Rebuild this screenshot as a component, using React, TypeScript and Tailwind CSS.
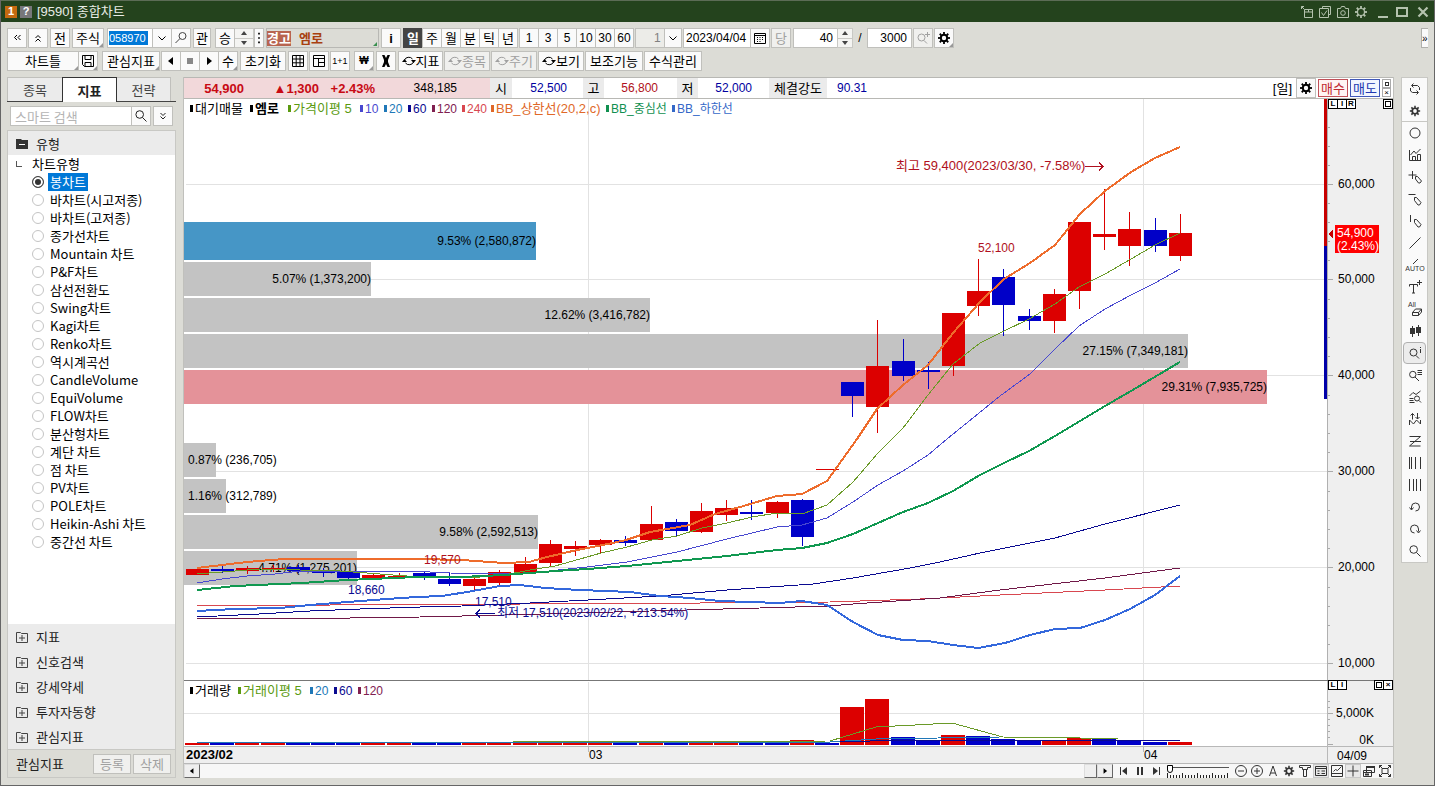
import { useState } from 'react';
import type { ReactNode } from 'react';
import clsx from 'clsx';

type Point = [number, number];

// name -> path data on a 14x14 grid; filled paths go in `fill`
const icons: Record<string, { d?: string; fill?: string }> = {
  left2: { d: 'M7 4 4.5 6.5 7 9M10.5 4 8 6.5 10.5 9' },
  up2: { d: 'M4.500 7 7 4.500 9.500 7M4.500 10.500 7 8 9.500 10.500' },
  down2: { d: 'M4.500 4 7 6.500 9.500 4M4.500 7.500 7 10 9.500 7.500' },
  down: { d: 'M3.500 5.500 7 9 10.500 5.500' },
  dots: { fill: 'M6 1h2v2H6zM6 6h2v2H6zM6 11h2v2H6z' },
  search: { d: 'M9.500 5.500a3.800 3.800 0 1 1-7.600 0a3.800 3.800 0 1 1 7.600 0M8.500 8.500 12.500 12.500' },
  find: { d: 'M12 5a3.500 3.500 0 1 1-7 0a3.500 3.500 0 1 1 7 0M6 7.500 1.500 12' },
  findPlus: { d: 'M9 6.500a3.500 3.500 0 1 1-7 0a3.500 3.500 0 1 1 7 0M8 9.500 11 12.500M11.500 1v5M9 3.500h5' },
  save: { d: 'M1.500 1.500h11v11h-9l-2-2zM4 1.500v4h6v-4M4 12.500v-4h6v4' },
  table: { d: 'M1.500 1.500h11v11h-11zM1.500 5h11M1.500 8.800h11M5.200 1.500v11M9 1.500v11' },
  layout: { d: 'M1.500 1.500h11v11h-11zM1.500 4.500h11M6.500 4.500v8M6.500 8.500h6' },
  calendar: { d: 'M1.500 2.500h11v10h-11zM1.500 4.500h11M4 6.500h1M6.500 6.500h1M9 6.500h1M4 8.500h1M6.500 8.500h1M9 8.500h1M4 10.500h1M6.500 10.500h1' },
  prev: { fill: 'M9 3v8L4 7z' },
  stop: { fill: 'M4 4h6v6H4z' },
  next: { fill: 'M5 3v8l5-4z' },
  cut: { fill: 'M3 1h2.500L7 4l1.500-3H11L9 6v2l2 5H8.500L7 10l-1.500 3H3l2-5V6z' },
  cycle: { d: 'M2.500 6a4.500 4 0 0 1 8-1M11.500 8a4.500 4 0 0 1-8 1', fill: 'M9 6h5l-2.500 3zM0 8h5L2.500 5z' },
  repeat: { d: 'M4 3.500h5.500l2 2V8M2.500 6v3l2 1.500H10M5.500 1.500l-2 2 2 2M8.500 8.500l2 2-2 2' },
  circle: { d: 'M12 7a5 5 0 1 1-10 0a5 5 0 1 1 10 0' },
  chart: { d: 'M1.500 2v10.500H13M4.500 12V8.500h3V12M9.500 12V6.500h3V12M2.500 7 6 3l2 2.500 4.500-4.500' },
  crossPen: { d: 'M4.500 1v8M.5 5h8M7.500 6.500h2l4 4.500-1.500 2H10.500L7.500 9z' },
  linePen: { d: 'M.5 2.500h7M6.500 5.500h2l4.500 5-1.500 2.500H10L6.500 8.500z' },
  vertPen: { d: 'M2.500 1v7M6.500 5.500h2l4.500 5-1.500 2.500H10L6.500 8.500z' },
  line: { d: 'M1.500 12.500 12.500 1.500' },
  text: { d: 'M1.500 6.500V4.500h8v2M5.500 4.500V13M4 13h3M9 2.500h5M11.500 0v5' },
  candles: { d: 'M4.500 2v11M10.500 1v11', fill: 'M2 4h5v6H2zM8 3h5v6H8z' },
  findInfo: { d: 'M9 6.500a3.500 3.500 0 1 1-7 0a3.500 3.500 0 1 1 7 0M8 9.500 11 12.500M12.500 1v1M12.500 3v4' },
  findList: { d: 'M8 6.500a3.200 3.200 0 1 1-6.400 0a3.200 3.200 0 1 1 6.400 0M7 9l4 4M9.500 2.500H14M9.500 4.500H14M9.500 6.500H14' },
  findChart: { d: 'M1.500 6 5 2.500 8 4.500 12.500 1M1.500 8.500h4M1.500 10.500h4M1.500 12.500h5M11.500 8.500a2.500 2.500 0 1 1-5 0a2.500 2.500 0 1 1 5 0M11 10.500l2 2' },
  arrowsM: { d: 'M1.500 13V8l4 4 3-4 4 4V8M4.500 1.500v6M9.500 1v6M2.500 3.500l2-2 2 2M7.500 5l2 2 2-2' },
  zig: { d: 'M1.500 2.500h11l-11 9.500h11M2 7.500h11' },
  bars1: { d: 'M1.500 1v12M3.500 1v12M7.500 1v12M12.500 1v12' },
  bars2: { d: 'M1.500 1v12M5.500 1v12M8.500 1v12M12.500 1v12' },
  undo: { d: 'M3.500 9.500V7a4 4 0 1 1 4 4M1.500 7.500l2 2.500 2-2.500' },
  redo: { d: 'M10.500 9.500V7a4 4 0 1 0-4 4M8.500 8.500l2 2.500 2-2.500' },
  minus: { d: 'M12.500 7a5.500 5.500 0 1 1-11 0a5.500 5.500 0 1 1 11 0M4 7h6' },
  plus: { d: 'M12.500 7a5.500 5.500 0 1 1-11 0a5.500 5.500 0 1 1 11 0M4 7h6M7 4v6' },
  peak: { d: 'M3.500 12 7 2l3.500 10M5 9h4' },
  tree: { d: 'M1.500 3.500v-2h11v2h-3v2h-5v-2zM5.500 5.500v7h3v-7' },
  panel: { d: 'M1.500 2.500h11v9h-11zM1.500 4.500h11M3.500 7h2M3.500 9.500h2M7.500 7h3.500M7.500 9.500h3.500' },
  trend: { d: 'M1.500 1.500h11v11h-11zM1.500 9.500h11M3.500 7.500l2-2 2 1 4-4' },
  cross: { d: 'M7 1.500v11M1.500 7h11' },
  stack: { d: 'M4.500 2.500h8v6h-8zM1.500 6.500h8v6h-8zM1.500 8.500h8', fill: 'M4 2h9v2H4zM3 9.500h4v2H3z' },
  expand: { d: 'M4 4.500h6v5H4zM1.500 4V1.500H4M10 1.500h2.500V4M12.500 10v2.500H10M4 12.500H1.500V10M1.500 1.500l3 3M12.500 1.500l-3 3M12.500 12.500l-3-3M1.500 12.500l3-3' },
  first: { d: 'M3.500 3v8', fill: 'M10 3v8L5 7z' },
  pause: { fill: 'M4 3h2v8H4zM8 3h2v8H8z' },
  last: { d: 'M10.500 3v8', fill: 'M4 3v8l5-4z' },
  popout: { d: 'M4.500 4.500h8v8h-8zM4.500 7h8M8.500 4.500V7M1.500 4V1.500H4M1.500 1.500l3 3' },
  checks: { d: 'M4.500 3.500v-2h8v8h-2M1.500 3.500h9v9h-9zM3.500 7.500l2 3L9 5.500' },
  camera: { d: 'M1.500 3.500h3l1-2h3l1 2h3v9h-11zM9.300 8a2.300 2.300 0 1 1-4.600 0a2.300 2.300 0 1 1 4.600 0' },
  folderPlus: { d: 'M1.500 2.500h4l1 1h6v9h-11zM4 8h6M7 5v6' },
};

function Icon({ name, className = 'size-3.5' }: { name: string; className?: string }) {
  const icon = icons[name];
  return (
    <svg viewBox="0 0 14 14" className={clsx('shrink-0', className)} fill="none" aria-hidden="true">
      {icon.fill && <path d={icon.fill} fill="currentColor" />}
      {icon.d && <path d={icon.d} stroke="currentColor" />}
    </svg>
  );
}

function Gear({ hollow, className = 'size-3.5' }: { hollow?: boolean; className?: string }) {
  return (
    <svg viewBox="0 0 14 14" className={clsx('shrink-0', className)} fill="none" aria-hidden="true">
      <circle cx="7" cy="7" r={hollow ? 3.5 : 3.2} stroke="currentColor" strokeWidth={hollow ? 1.2 : 2} />
      {[0, 45, 90, 135, 180, 225, 270, 315].map((a) => (
        <path key={a} d="M7 1v2.500" stroke="currentColor" strokeWidth="1.800" transform={`rotate(${a} 7 7)`} />
      ))}
    </svg>
  );
}

interface BtnProps {
  children?: ReactNode;
  label?: string;
  className?: string;
  corner?: boolean;
  disabled?: boolean;
}

const Btn = ({ children, label, className = 'w-5', corner, disabled }: BtnProps) => (
  <button
    type="button"
    aria-label={label}
    disabled={disabled}
    className={clsx(
      'relative flex h-5 shrink-0 items-center justify-center whitespace-nowrap border border-[#c0c0bc] leading-none',
      disabled ? 'bg-[#f0f0ee] text-[#a0a0a0]' : 'bg-[#fafafa]',
      className,
    )}
  >
    {children}
    {corner && (
      <svg viewBox="0 0 4 4" className="absolute right-0 bottom-0 size-1" aria-hidden="true">
        <path d="M4 0v4H0z" fill="#999" />
      </svg>
    )}
  </button>
);

const Spinner = ({ className }: { className?: string }) => (
  <div className={clsx('flex h-5 shrink-0 flex-col border border-[#c8c8c4] bg-[#f4f4f2]', className)}>
    <button type="button" aria-label="증가" className="flex flex-1 items-center justify-center border-b border-[#c8c8c4]">
      <svg viewBox="0 0 8 4" className="h-1 w-2"><path d="M1 4 4 0l3 4z" fill="#444" /></svg>
    </button>
    <button type="button" aria-label="감소" className="flex flex-1 items-center justify-center">
      <svg viewBox="0 0 8 4" className="h-1 w-2"><path d="M1 0h6L4 4z" fill="#444" /></svg>
    </button>
  </div>
);

function TitleBar() {
  return (
    <header className="flex h-[22px] shrink-0 items-center border-t border-[#5c6c56] bg-[#24431d] px-1 text-[#e8ece6]">
      <span className="flex size-3 items-center justify-center bg-[#c56a10] text-[11px] font-bold leading-none text-white">1</span>
      <span className="ml-[3px] flex size-3 items-center justify-center bg-[#77777a] text-[11px] font-bold leading-none text-white">?</span>
      <h1 className="ml-[5px] text-[13px] leading-none">[9590] 종합차트</h1>
      <div className="ml-auto flex items-center gap-1 text-[#b4c2ae]">
        <button type="button" aria-label="분리"><Icon name="popout" /></button>
        <button type="button" aria-label="선택"><Icon name="checks" /></button>
        <button type="button" aria-label="캡처"><Icon name="camera" /></button>
        <button type="button" aria-label="설정"><Gear hollow /></button>
        <button type="button" aria-label="최소화" className="ml-1.5 flex h-3 w-3.5 items-end"><i className="h-0.5 w-2.5 bg-current" /></button>
        <button type="button" aria-label="최대화" className="h-2.5 w-3 border-2" />
        <button type="button" aria-label="닫기" className="ml-1">
          <svg viewBox="0 0 14 14" className="size-3.5"><path d="M2.500 2.500l9 9M11.500 2.500l-9 9" stroke="currentColor" strokeWidth="2.200" /></svg>
        </button>
      </div>
    </header>
  );
}

function TopToolbar() {
  const [period, setPeriod] = useState('일');
  return (
    <div className="flex h-5 items-center text-[13px]">
      <Btn label="왼쪽"><Icon name="left2" /></Btn>
      <Btn label="위" className="ml-px w-5"><Icon name="up2" /></Btn>
      <Btn className="ml-0.5 w-5">전</Btn>
      <Btn className="ml-0.5 w-8" corner>주식</Btn>
      <div className="ml-[3px] flex h-5 w-[46px] shrink-0 items-center border border-[#c0c0bc] bg-white px-px">
        <input aria-label="종목코드" defaultValue="058970" className="h-3.5 w-[39px] bg-[#0078d7] text-[11px] leading-none text-white outline-none" />
      </div>
      <Btn label="목록" className="-ml-px w-5"><Icon name="down" /></Btn>
      <Btn label="찾기" className="-ml-px w-5 text-[#444]"><Icon name="find" /></Btn>
      <Btn className="ml-0.5 w-[18px]">관</Btn>
      <Btn className="ml-1 w-5">승</Btn>
      <Spinner className="-ml-px w-5" />
      <Btn label="더보기" className="w-2.5"><Icon name="dots" className="size-3" /></Btn>
      <div className="relative ml-0.5 flex h-5 w-[113px] shrink-0 items-center border border-[#b8b8b4] bg-[#dcdcd6] font-bold leading-none">
        <span className="bg-[#b86450] py-px text-white">경고</span>
        <span className="ml-2 text-[#a84010]">엠로</span>
        <svg viewBox="0 0 4 4" className="absolute right-px bottom-px size-1"><path d="M4 0v4H0z" fill="#3a9050" /></svg>
      </div>
      <Btn className="ml-0.5 w-5 font-bold">i</Btn>
      <div className="ml-0.5 flex" role="group" aria-label="주기">
        {['일', '주', '월', '분', '틱', '년'].map((p) => (
          <button
            key={p}
            type="button"
            onClick={() => setPeriod(p)}
            className={clsx(
              'flex h-5 w-5 items-center justify-center border leading-none not-first:-ml-px',
              p === period ? 'border-[#444] bg-[#444] font-bold text-white' : 'border-[#c0c0bc] bg-[#fafafa]',
            )}
          >
            {p}
          </button>
        ))}
      </div>
      <div className="ml-px flex text-xs">
        {[1, 3, 5, 10, 30, 60].map((n) => (
          <Btn key={n} className="w-5 not-first:-ml-px">{n}</Btn>
        ))}
      </div>
      <div className="relative ml-px h-5 w-[47px] shrink-0 text-xs">
        <select aria-label="분틱" className="h-5 w-full appearance-none border border-[#c0c0bc] bg-[#ecece8] pl-[18px] leading-none text-[#808080]">
          <option>1</option>
        </select>
        <span className="pointer-events-none absolute inset-y-0 right-0 flex w-[18px] items-center justify-center border border-[#c0c0bc] bg-[#fafafa]">
          <Icon name="down" />
        </span>
      </div>
      <input aria-label="날짜" defaultValue="2023/04/04" className="ml-px h-5 w-[68px] shrink-0 border border-[#c0c0bc] bg-white pl-0.5 text-xs" />
      <Btn label="달력" className="-ml-px w-5"><Icon name="calendar" /></Btn>
      <Btn className="ml-px w-5" disabled>당</Btn>
      <input aria-label="표시 개수" defaultValue="40" className="ml-0.5 h-5 w-[45px] shrink-0 border border-[#c0c0bc] bg-white pr-1 text-right text-xs" />
      <Spinner className="-ml-px w-4" />
      <span className="mx-1 w-1.5 text-center text-xs">/</span>
      <input aria-label="전체 개수" defaultValue="3000" className="h-5 w-[45px] shrink-0 border border-[#c0c0bc] bg-white pr-1 text-right text-xs" />
      <Btn label="확대" className="ml-px w-5" disabled><Icon name="findPlus" /></Btn>
      <Btn label="설정" className="ml-px w-5" corner><Gear /></Btn>
      <button type="button" aria-label="펼치기" className="ml-auto flex h-5 w-[7px] items-center border border-r-0 border-[#b0b0ac] bg-[#fafafa] text-[10px]">»</button>
    </div>
  );
}

function SecondToolbar() {
  return (
    <div className="mt-[3px] flex h-5 items-center text-[13px]">
      <Btn className="w-[72px]" corner>차트틀</Btn>
      <Btn label="저장" className="-ml-px w-5" corner><Icon name="save" /></Btn>
      <Btn className="ml-1 w-[58px]" corner>관심지표</Btn>
      <Btn label="이전" className="ml-px w-5"><Icon name="prev" /></Btn>
      <Btn label="정지" className="-ml-px w-5 text-[#888]"><Icon name="stop" /></Btn>
      <Btn label="다음" className="-ml-px w-5"><Icon name="next" /></Btn>
      <Btn className="-ml-px w-5" corner>수</Btn>
      <Btn className="ml-0.5 w-[46px]">초기화</Btn>
      <Btn label="표" className="ml-0.5 w-5"><Icon name="table" /></Btn>
      <Btn label="배치" className="ml-px w-5"><Icon name="layout" /></Btn>
      <Btn className="ml-px w-5 text-[9px]">1+1</Btn>
      <Btn className="ml-1 w-5 text-[10px] font-bold" corner>₩</Btn>
      <Btn label="삭제" className="ml-0.5 w-5"><Icon name="cut" /></Btn>
      <Btn className="ml-0.5 w-[45px]"><Icon name="cycle" />지표</Btn>
      <Btn className="ml-px w-[46px]" disabled><Icon name="cycle" />종목</Btn>
      <Btn className="ml-px w-[46px]" disabled><Icon name="cycle" />주기</Btn>
      <Btn className="ml-px w-[46px]"><Icon name="cycle" />보기</Btn>
      <Btn className="ml-px w-[58px]">보조기능</Btn>
      <Btn className="ml-px w-[58px]">수식관리</Btn>
    </div>
  );
}

const chartTypes = [
  '봉차트', '바차트(시고저종)', '바차트(고저종)', '종가선차트', 'Mountain 차트', 'P&F차트', '삼선전환도',
  'Swing차트', 'Kagi차트', 'Renko차트', '역시계곡선', 'CandleVolume', 'EquiVolume', 'FLOW차트',
  '분산형차트', '계단 차트', '점 차트', 'PV차트', 'POLE차트', 'Heikin-Ashi 차트', '중간선 차트',
];

function Sidebar() {
  const [type, setType] = useState('봉차트');
  return (
    <aside className="flex w-[169px] shrink-0 flex-col font-['Noto_Sans_CJK_KR',sans-serif] text-[13px] text-[#222]">
      <div className="flex h-[25px] shrink-0 items-stretch border-b border-[#444]" role="tablist">
        <button type="button" role="tab" className="w-[55px] border-t border-l border-[#c0c0bc] bg-[#ebebeb] leading-none text-[#444]">종목</button>
        <button type="button" role="tab" aria-selected="true" className="-mb-px w-[55px] border border-b-0 border-[#333] bg-white leading-none font-bold">지표</button>
        <button type="button" role="tab" className="w-[54px] border-t border-r border-[#c0c0bc] bg-[#ebebeb] leading-none text-[#444]">전략</button>
      </div>
      <div className="flex h-7 shrink-0 items-center pl-[3px]">
        <input aria-label="검색" placeholder="스마트 검색" className="h-5 w-[122px] border border-[#c0c0bc] bg-white px-1 placeholder:text-[#b4b4b4]" />
        <Btn label="검색 실행" className="-ml-px w-5"><Icon name="search" /></Btn>
        <Btn label="접기" className="ml-0.5 w-5"><Icon name="down2" /></Btn>
      </div>
      <div className="flex flex-1 flex-col border border-[#c8c8c4] bg-white">
        <button type="button" className="flex h-6 items-center gap-2 bg-[#ebebeb] pl-2 leading-none">
          <svg viewBox="0 0 12 11" className="h-[11px] w-3"><path d="M0 1h5l1 1h6v9H0z" fill="#333" /><path d="M3 6.500h6" stroke="#fff" /></svg>
          유형
        </button>
        <fieldset className="flex-1 pb-16">
          <legend className="flex h-[18px] items-center gap-2.5 pl-2 text-black">
            <i className="size-1.5 border-b border-l border-[#555]" />
            차트유형
          </legend>
          {chartTypes.map((t) => (
            <label key={t} className="flex h-[18px] items-center gap-1 pl-6 text-black">
              <input
                type="radio"
                name="chart-type"
                checked={t === type}
                onChange={() => setType(t)}
                className="size-3 shrink-0 appearance-none rounded-full border border-[#c4c4c4] bg-white checked:border-[#444] checked:bg-[#333] checked:shadow-[inset_0_0_0_2px_#fff]"
              />
              <span className={clsx('px-0.5 leading-[18px]', t === type && 'bg-[#0078d7] text-white')}>{t}</span>
            </label>
          ))}
        </fieldset>
        {['지표', '신호검색', '강세약세', '투자자동향', '관심지표'].map((s) => (
          <button key={s} type="button" className="flex h-[25px] shrink-0 items-center gap-[7px] bg-[#ebebeb] pl-[7px] leading-none">
            <Icon name="folderPlus" className="size-3.5 text-[#444]" />
            {s}
          </button>
        ))}
        <div className="flex h-7 shrink-0 items-center border-t border-[#c8c8c4] bg-[#dcdcd6] pl-2 leading-none">
          <span className="flex-1">관심지표</span>
          <Btn className="w-[38px]" disabled>등록</Btn>
          <Btn className="mr-1 ml-0.5 w-[38px]" disabled>삭제</Btn>
        </div>
      </div>
    </aside>
  );
}

function QuoteBar() {
  const label = 'flex h-full items-center justify-center bg-[#ebebeb] text-[13px]';
  return (
    <div className="flex h-[22px] shrink-0 items-center border-y border-[#b8b8b4] bg-white text-xs leading-none">
      <div className="flex h-full w-[306px] shrink-0 items-center bg-[#f2d8da]">
        <b className="w-[60px] text-right text-[13px] text-[#c80a14]">54,900</b>
        <b className="w-[75px] text-right text-[13px] text-[#c80a14]">▲1,300</b>
        <b className="w-14 text-right text-[13px] text-[#c80a14]">+2.43%</b>
        <span className="w-[82px] text-right">348,185</span>
      </div>
      <span className={clsx(label, 'w-[22px]')}>시</span>
      <span className="w-[71px] pr-4 text-right text-[#0000a0]">52,500</span>
      <span className={clsx(label, 'w-[21px]')}>고</span>
      <span className="w-[73px] pr-[19px] text-right text-[#b01020]">56,800</span>
      <span className={clsx(label, 'w-[21px]')}>저</span>
      <span className="w-[71px] pr-[17px] text-right text-[#0000a0]">52,000</span>
      <span className={clsx(label, 'w-[58px]')}>체결강도</span>
      <span className="ml-2.5 text-[#0000a0]">90.31</span>
      <span className="ml-auto text-[13px]">[일]</span>
      <Btn label="차트 설정" className="ml-1 w-5"><Gear /></Btn>
      <button type="button" className="ml-0.5 h-[18px] w-[30px] border border-[#c05058] bg-[#fff4f4] text-[13px] leading-none text-[#c02830]">매수</button>
      <button type="button" className="ml-0.5 h-[18px] w-[30px] border border-[#4058b8] bg-[#f2f6ff] text-[13px] leading-none text-[#2038b0]">매도</button>
      <div className="mx-0.5 flex flex-col">
        <button type="button" aria-label="복원" className="flex size-[9px] items-center justify-center border border-[#aaa]"><i className="size-1 border border-[#333]" /></button>
        <button type="button" aria-label="닫기" className="flex size-[9px] items-center justify-center border border-[#aaa] text-[8px] leading-none">×</button>
      </div>
    </div>
  );
}

// volume by price bands: top, height, right edge, label, text anchor x, fill
const bands: [number, number, number, string, number | null, string][] = [
  [222, 38, 536, '9.53% (2,580,872)', null, '#4696c6'],
  [262, 34, 371, '5.07% (1,373,200)', null, '#c3c3c3'],
  [298, 34, 650, '12.62% (3,416,782)', null, '#c3c3c3'],
  [334, 34, 1188, '27.15% (7,349,181)', null, '#c3c3c3'],
  [370, 34, 1267, '29.31% (7,935,725)', null, '#e49299'],
  [443, 34, 216, '0.87% (236,705)', 188, '#c3c3c3'],
  [479, 34, 226, '1.16% (312,789)', 188, '#c3c3c3'],
  [515, 34, 538, '9.58% (2,592,513)', null, '#c3c3c3'],
  [551, 34, 357, '4.71% (1,275,201)', null, '#c3c3c3'],
];

// colour, body top, body bottom, wick top, wick bottom
const candles: ['r' | 'b', number, number, number, number][] = [
  ['r', 569, 575, 567, 575], ['b', 569, 571, 566, 573], ['r', 568, 571, 566, 574], ['r', 568, 570, 565, 572],
  ['b', 567, 571, 565, 573], ['b', 570, 573, 568, 577], ['b', 572, 578, 571, 580], ['r', 575, 578, 574, 579],
  ['r', 576, 578, 573, 579], ['b', 573, 577, 571, 580], ['b', 579, 584, 573, 586], ['r', 579, 586, 578, 591],
  ['r', 572, 583, 570, 585], ['r', 564, 573, 557, 574], ['r', 544, 563, 540, 566], ['r', 546, 549, 541, 556],
  ['r', 540, 545, 539, 553], ['b', 540, 543, 536, 546], ['r', 524, 540, 506, 541], ['b', 522, 531, 519, 536],
  ['r', 511, 532, 503, 533], ['r', 508, 515, 500, 521], ['b', 512, 514, 500, 520], ['r', 502, 513, 501, 518],
  ['b', 500, 537, 499, 546], ['r', 469, 470, 469, 470], ['b', 382, 396, 382, 417], ['r', 366, 407, 320, 433],
  ['b', 361, 376, 339, 381], ['b', 370, 372, 362, 389], ['r', 313, 366, 313, 376], ['r', 291, 306, 259, 316],
  ['b', 277, 305, 269, 336], ['b', 316, 321, 309, 330], ['r', 294, 321, 289, 333], ['r', 222, 291, 222, 309],
  ['r', 234, 237, 189, 250], ['r', 229, 246, 212, 266], ['b', 230, 246, 218, 252], ['r', 233, 256, 214, 261],
];

const lines: { color: string; width: number; points: Point[] }[] = [
  { color: '#d84850', width: 1, points: [[197, 606], [330, 605], [520, 604], [700, 603], [830, 602], [920, 599], [1000, 595], [1105, 590], [1180, 586]] },
  { color: '#701848', width: 1, points: [[197, 619], [350, 618], [420, 617], [505, 615], [650, 611], [760, 608], [830, 606], [853, 604], [940, 598], [1000, 590], [1105, 578], [1180, 568]] },
  { color: '#0a0a90', width: 1, points: [[197, 617], [259, 614], [310, 611], [360, 609], [420, 607], [462, 606], [530, 603], [588, 600], [660, 596], [727, 590], [813, 584], [853, 578], [910, 568], [940, 562], [980, 553], [1000, 549], [1055, 538], [1105, 524], [1180, 505]] },
  { color: '#4848d0', width: 1, points: [[197, 583], [222, 579], [247, 576], [275, 574], [300, 571], [430, 572], [450, 573], [500, 574], [530, 573], [587, 567], [627, 562], [677, 552], [727, 539], [777, 527], [802, 525], [827, 518], [853, 502], [878, 485], [903, 471], [928, 455], [947, 439], [1000, 396], [1030, 374], [1055, 349], [1079, 326], [1105, 309], [1131, 295], [1155, 283], [1180, 269]] },
  { color: '#6a9a28', width: 1, points: [[197, 574], [222, 572], [260, 569], [340, 571], [380, 574], [420, 577], [480, 577], [504, 575], [530, 570], [555, 566], [580, 559], [601, 553], [627, 547], [652, 540], [677, 536], [702, 528], [727, 523], [752, 517], [777, 513], [802, 514], [827, 505], [853, 482], [878, 453], [903, 428], [928, 395], [953, 364], [980, 343], [1004, 331], [1029, 319], [1055, 304], [1079, 287], [1105, 274], [1131, 259], [1155, 245], [1180, 233]] },
  { color: '#3468dc', width: 2, points: [[197, 611], [235, 609], [280, 608], [310, 605], [360, 601], [387, 599], [417, 597], [442, 596], [467, 592], [500, 586], [520, 585], [545, 588], [580, 590], [630, 592], [660, 596], [690, 598], [720, 601], [780, 603], [802, 601], [827, 605], [853, 622], [878, 635], [903, 640], [928, 641], [953, 645], [978, 648], [1005, 643], [1030, 635], [1055, 629], [1080, 628], [1105, 620], [1130, 609], [1155, 595], [1180, 576]] },
  { color: '#109850', width: 2, points: [[197, 590], [235, 586], [302, 583], [347, 580], [417, 577], [462, 577], [504, 575], [530, 573], [555, 571], [587, 569], [627, 566], [677, 561], [727, 556], [777, 550], [802, 548], [827, 543], [853, 534], [878, 523], [903, 512], [928, 503], [953, 491], [980, 475], [1004, 463], [1029, 451], [1055, 436], [1080, 421], [1105, 406], [1131, 391], [1180, 362]] },
  { color: '#ee6c2c', width: 2, points: [[197, 568], [222, 565], [247, 562], [284, 559], [417, 559], [462, 560], [504, 563], [529, 562], [547, 557], [577, 550], [608, 544], [626, 540], [650, 532], [690, 525], [715, 514], [740, 507], [777, 496], [802, 494], [827, 481], [857, 439], [877, 409], [903, 385], [928, 365], [953, 333], [980, 302], [1004, 279], [1030, 263], [1055, 245], [1080, 214], [1105, 191], [1131, 172], [1155, 158], [1180, 147]] },
];

const toPoints = (pts: Point[]) => pts.map((p) => p.join(',')).join(' ');
const slotX = (i: number) => Math.round(186 + i * 25.2);
const RED = '#dc0000';
const BLUE = '#0000c8';

interface LegendItem { x: number; text: string; color: string; big?: boolean; bold?: boolean }

const priceLegend: LegendItem[] = [
  { x: 190, text: '대기매물', color: '#000', big: true },
  { x: 250, text: '엠로', color: '#000', big: true, bold: true },
  { x: 288, text: '가격이평 5', color: '#5a9a10', big: true },
  { x: 360, text: '10', color: '#4848d0' },
  { x: 384, text: '20', color: '#2078b8' },
  { x: 408, text: '60', color: '#0a0a90' },
  { x: 432, text: '120', color: '#802050' },
  { x: 462, text: '240', color: '#d84850' },
  { x: 491, text: 'BB_상한선(20,2,c)', color: '#e06828', big: true },
  { x: 606, text: 'BB_중심선', color: '#109050' },
  { x: 672, text: 'BB_하한선', color: '#3468c8' },
];

const volumeLegend: LegendItem[] = [
  { x: 190, text: '거래량', color: '#000', big: true },
  { x: 238, text: '거래이평 5', color: '#5a9a10', big: true },
  { x: 310, text: '20', color: '#2078b8' },
  { x: 334, text: '60', color: '#0a0a90' },
  { x: 358, text: '120', color: '#802050' },
];

const Legend = ({ items, y }: { items: LegendItem[]; y: number }) => (
  <g>
    {items.map((it) => (
      <g key={it.x} fill={it.color}>
        <rect x={it.x} y={y - 3} width="3" height="7" />
        <text x={it.x + 5} y={y + 5} fontSize={it.big ? 13 : 12} fontWeight={it.bold ? 700 : 400}>{it.text}</text>
      </g>
    ))}
  </g>
);

const TinyBox = ({ label, children }: { label: string; children: ReactNode }) => (
  <button type="button" aria-label={label} className="-mr-px flex size-2.5 items-center justify-center border border-black bg-white text-[8px] font-bold leading-none">
    {children}
  </button>
);

function PriceChart() {
  return (
    <div className="relative">
      <svg viewBox="184 99 1209 581" className="block w-full" fontSize="12" shapeRendering="crispEdges" role="img" aria-label="가격 차트">
        <rect x="1328" y="99" width="65" height="581" fill="#efefef" />
        {[184, 279, 375, 471, 567, 663].map((y, i) => (
          <g key={y}>
            <path d={`M186 ${y}.5H1328`} stroke="#e2e2e2" />
            <path d={`M1328 ${y}.5h5`} stroke="#aaa" />
            <text x="1338" y={y + 4}>{`${60 - i * 10},000`}</text>
            {[1, 2, 3, 4].map((k) => (
              <path key={k} d={`M1328 ${y - k * 19}.5h2`} stroke="#aaa" />
            ))}
          </g>
        ))}
        <path d="M588.500 99v581M1143.500 99v581" stroke="#e2e2e2" />
        <path d="M1327.500 99v581" stroke="#b0b0b0" />
        <rect x="1324" y="99" width="3" height="147" fill="#c80000" />
        <rect x="1324" y="246" width="3" height="153" fill="#0000a8" />

        {bands.map(([y, h, right, , , fill]) => (
          <rect key={y} x="184" y={y} width={right - 184} height={h} fill={fill} />
        ))}
        {bands.map(([y, h, right, text, x]) => (
          <text key={y} x={x ?? right} y={y + h / 2 + 4} textAnchor={x ? 'start' : 'end'}>{text}</text>
        ))}

        {candles.map(([c, top, bottom, high, low], i) => (
          <g key={i} fill={c === 'r' ? RED : BLUE}>
            <rect x={slotX(i) + 11} y={high} width="1" height={low - high} />
            <rect x={slotX(i)} y={top} width="23" height={bottom - top} />
          </g>
        ))}
        {lines.map((l) => (
          <polyline key={l.color} points={toPoints(l.points)} fill="none" stroke={l.color} strokeWidth={l.width} />
        ))}

        <g fill="#b01020">
          <text x="896" y="170" fontSize="13">최고 59,400(2023/03/30, -7.58%)</text>
          <text x="978" y="252">52,100</text>
          <text x="424" y="564">19,570</text>
          <path d="M1085 166.500h18M1099 162.500l4 4-4 4" fill="none" stroke="#b01020" />
        </g>
        <g fill="#0a0a90">
          <text x="348" y="594">18,660</text>
          <text x="475" y="606">17,510</text>
          <text x="497" y="617">최저 17,510(2023/02/22, +213.54%)</text>
          <path d="M476 613.500h19M480 609.500l-4 4 4 4" fill="none" stroke="#0a0a90" />
        </g>

        <path d="M1333 229v10l-5-5z" fill="#c80000" />
        <rect x="1335" y="225" width="44" height="28" fill="#f00" />
        <text x="1337" y="237" fill="#fff">54,900</text>
        <text x="1337" y="250" fill="#fff">(2.43%)</text>
        <Legend items={priceLegend} y={108} />
      </svg>
      <div className="absolute top-0 right-0 flex w-[65px] pr-px">
        <TinyBox label="로그">L</TinyBox>
        <TinyBox label="반전">I</TinyBox>
        <TinyBox label="우측">R</TinyBox>
        <span className="flex-1" />
        <TinyBox label="최대화"><i className="size-1.5 border border-black" /></TinyBox>
      </div>
    </div>
  );
}

const volumeTops: Record<number, number> = {
  13: 742, 14: 741, 18: 741, 19: 742, 20: 742, 24: 740, 26: 707, 27: 699, 28: 737, 29: 740, 30: 735,
  31: 736, 32: 739, 33: 741, 34: 740, 35: 738, 36: 739, 37: 740, 38: 742, 39: 742,
};
// days where the volume bar colour differs from the candle
const risingVolume = [24, 26];
const fallingVolume = [22, 23, 25, 31, 36, 37];

function volumeColor(i: number) {
  if (risingVolume.includes(i)) return RED;
  if (fallingVolume.includes(i)) return BLUE;
  return candles[i][0] === 'r' ? RED : BLUE;
}

function VolumeChart() {
  return (
    <div className="relative">
      <svg viewBox="184 680 1209 84" className="block w-full" fontSize="12" shapeRendering="crispEdges" role="img" aria-label="거래량 차트">
        <rect x="1328" y="680" width="65" height="84" fill="#efefef" />
        <rect x="184" y="746" width="1144" height="18" fill="#efefef" />
        <path d="M184 680.500h1209" stroke="#777" />
        <path d="M184 713.500h1144M588.500 682v64M1143.500 682v64" stroke="#e2e2e2" />
        <path d="M184 746.500h1209M184 763.500h1209M1327.500 681v83M588.500 746v6M1143.500 746v6" stroke="#b8b8b8" />
        <path d="M1328 701.500h2M1328 707.500h2M1328 713.500h5M1328 719.500h2M1328 725.500h2M1328 731.500h2M1328 737.500h2M1328 744.500h5" stroke="#aaa" />
        {candles.map((_, i) => {
          const top = volumeTops[i] ?? 743;
          return <rect key={i} x={slotX(i) - 1} y={top} width="24" height={745 - top} fill={volumeColor(i)} />;
        })}
        <g fill="none">
          <polyline points="197,743 830,741 876,727 915,725 952,723 1003,737 1080,738 1118,739" stroke="#6a9a28" />
          <polyline points="197,743 830,742 876,739 1000,737 1180,737" stroke="#2078b8" />
          <polyline points="840,742 870,741 1180,740" stroke="#0a0a90" />
        </g>
        <text x="1374" y="717" textAnchor="end">5,000K</text>
        <text x="1374" y="744" textAnchor="end">0K</text>
        <text x="186" y="759" fontSize="13" fontWeight="700">2023/02</text>
        <text x="589" y="759">03</text>
        <text x="1144" y="759">04</text>
        <text x="1337" y="760">04/09</text>
        <Legend items={volumeLegend} y={690} />
      </svg>
      <div className="absolute top-0 right-0 flex w-[65px] pr-px">
        <TinyBox label="로그">L</TinyBox>
        <TinyBox label="반전">I</TinyBox>
        <span className="flex-1" />
        <TinyBox label="최대화"><i className="size-1.5 border border-black" /></TinyBox>
        <TinyBox label="닫기">×</TinyBox>
      </div>
    </div>
  );
}

function ScrollBar() {
  return (
    <div className="flex h-3.5 shrink-0 items-center bg-[#f7f7f7] text-[#333]">
      <button type="button" aria-label="왼쪽으로" className="flex h-3.5 w-4 items-center justify-center border border-[#ddd] border-r-[#666] border-b-[#666] bg-[#efefef] text-black">
        <Icon name="prev" className="size-2.5" />
      </button>
      <span className="flex-1" />
      <span className="h-3.5 w-[13px] border border-[#ddd] border-r-[#666] border-b-[#666] bg-[#efefef]" />
      <button type="button" aria-label="오른쪽으로" className="flex h-3.5 w-4 items-center justify-center border border-[#ddd] border-r-[#666] border-b-[#666] bg-[#efefef] text-black">
        <Icon name="next" className="size-2.5" />
      </button>
      <div className="flex w-[54px] items-center justify-center gap-0.5">
        <button type="button" aria-label="처음"><Icon name="first" /></button>
        <button type="button" aria-label="일시정지"><Icon name="pause" /></button>
        <button type="button" aria-label="끝"><Icon name="last" /></button>
      </div>
      <div className="flex w-[62px] flex-col">
        <input
          type="range"
          aria-label="속도"
          defaultValue={0}
          className="h-2 w-full appearance-none bg-[linear-gradient(#555,#555)] bg-[length:100%_1px] bg-[position:0_2px] bg-no-repeat [&::-webkit-slider-thumb]:h-2 [&::-webkit-slider-thumb]:w-1.5 [&::-webkit-slider-thumb]:appearance-none [&::-webkit-slider-thumb]:rounded-b-full [&::-webkit-slider-thumb]:border [&::-webkit-slider-thumb]:border-black [&::-webkit-slider-thumb]:bg-white"
        />
        <svg viewBox="0 0 62 5" className="h-[5px] w-full" shapeRendering="crispEdges">
          {Array.from({ length: 21 }, (_, i) => (
            <path key={i} d={`M${i * 3 + 0.5} ${i % 5 === 0 ? 0 : 2}V5`} stroke="#222" />
          ))}
        </svg>
      </div>
      <div className="ml-1 flex items-center">
        {['minus', 'plus', 'peak', 'gear', 'tree', 'panel', 'trend', 'cross', 'stack', 'expand'].map((name) => (
          <button
            key={name}
            type="button"
            aria-label={name}
            className={clsx(
              'flex h-3.5 w-4 items-center justify-center',
              ['panel', 'cross'].includes(name) && 'bg-[#e8e8e8] outline-1 -outline-offset-1 outline-[#c8c8c8]',
            )}
          >
            {name === 'gear' ? <Gear className="size-3" /> : <Icon name={name} className="size-3.5" />}
          </button>
        ))}
      </div>
    </div>
  );
}

const tools = [
  'repeat', 'gear', 'circle', 'chart', 'crossPen', 'linePen', 'vertPen', 'line', 'auto', 'text', 'all', 'candles',
  'findInfo', 'findList', 'findChart', 'arrowsM', 'zig', 'bars1', 'bars2', 'undo', 'redo', 'search',
];

function ToolIcon({ name }: { name: string }) {
  if (name === 'gear') return <Gear className="size-3" />;
  if (name === 'auto') {
    return (
      <svg viewBox="0 0 20 14" className="h-3.5 w-5">
        <path d="M8 6l5-5" stroke="currentColor" />
        <text x="10" y="13" textAnchor="middle" fontSize="7" fill="currentColor">AUTO</text>
      </svg>
    );
  }
  if (name === 'all') {
    return (
      <svg viewBox="0 0 16 16" className="size-4" fill="none">
        <text x="1" y="6" fontSize="7" fill="currentColor">All</text>
        <path d="M5.500 11.500l3-3.500h6l-3 3.500zM5.500 11.500v3h6v-3M11.500 14.500l3-3.500V8" stroke="currentColor" />
      </svg>
    );
  }
  return <Icon name={name} />;
}

function ToolRail() {
  return (
    <nav className="ml-[7px] flex w-[27px] shrink-0 flex-col self-start border border-[#c8c8c4] bg-[#fafafa] text-[#333]">
      {tools.map((name, i) => (
        <button
          key={name}
          type="button"
          aria-label={name}
          className={clsx(
            'flex h-[22px] items-center justify-center',
            i === 1 && 'border-b border-[#c8c8c4]',
            name === 'findInfo' && 'mx-px rounded border border-[#b0b0b0] bg-[#ececec]',
          )}
        >
          <ToolIcon name={name} />
        </button>
      ))}
    </nav>
  );
}

export default function App() {
  return (
    <div className="flex min-h-screen flex-col border-x border-b border-[#666] bg-[#dcdcd6] font-['Liberation_Sans','Noto_Sans_CJK_KR',sans-serif] text-black">
      <TitleBar />
      <div className="mt-1.5 pr-1.5 pl-1.5">
        <TopToolbar />
        <SecondToolbar />
      </div>
      <main className="mt-1.5 flex flex-1 pr-1.5 pb-[7px] pl-1.5">
        <Sidebar />
        <section className="ml-[7px] flex min-w-0 flex-1 flex-col border-x border-[#c0c0bc] bg-white">
          <QuoteBar />
          <PriceChart />
          <VolumeChart />
          <ScrollBar />
        </section>
        <ToolRail />
      </main>
    </div>
  );
}
